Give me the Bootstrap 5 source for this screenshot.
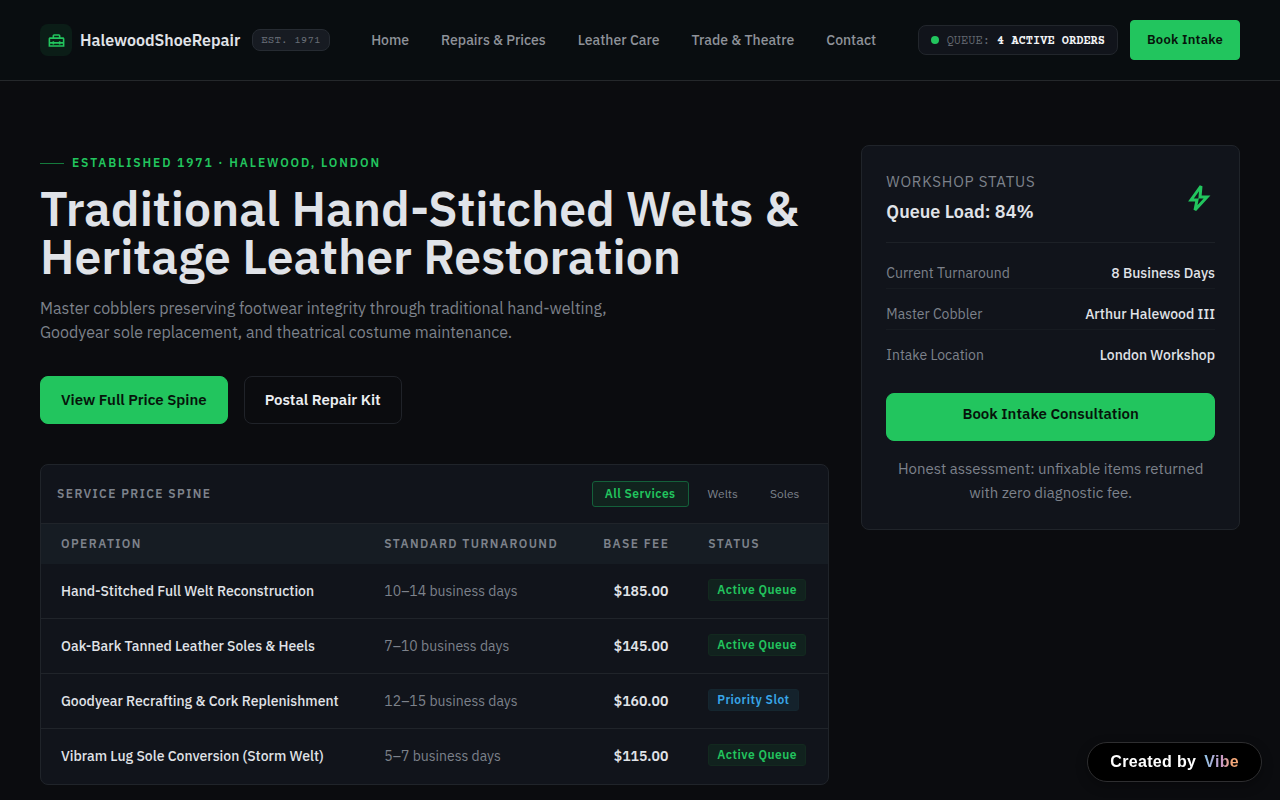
<!DOCTYPE html>
<html lang="en">
<head>
<meta charset="utf-8">
<meta name="viewport" content="width=device-width, initial-scale=1">
<title>Halewood Shoe Repair</title>
<link href="https://cdn.jsdelivr.net/npm/bootstrap@5.3.0/dist/css/bootstrap.min.css" rel="stylesheet">
<style>
:root{--green:#22c55e;--ink:#e0e3e8;--muted:#7d828b;--line:#20242a;--panel:#11141b}
body{background:#0b0c0f;color:var(--ink);font-family:"IBM Plex Sans",Roboto,"Liberation Sans",sans-serif;font-size:16px;line-height:24px}
a{color:inherit;text-decoration:none}
.wrap{padding-left:40px;padding-right:40px}
.site-head{background:#090d10;border-bottom:1px solid #25282b;min-height:81px}
.logo-box{width:32px;height:32px;border-radius:8px;background:#0b1d17;color:var(--green)}
.mono{font-family:"Courier Prime","Courier 10 Pitch","Nimbus Mono PS",FreeMono,"Liberation Mono",monospace}
.est{font-size:11px;line-height:18px;padding:2px 8px 0;border:1px solid #262b32;border-radius:8px;background:#171b22;color:#686e77;margin-left:4px}
.main-nav{font-size:14px;font-weight:500;color:#8e9299;gap:32px}
.queue{font-size:12px;padding:0 12px;border:1px solid #22262c;border-radius:8px;background:var(--panel);color:#62676f}
.queue-text{line-height:24px;padding-top:4px}
.queue b{color:#f2f3f5}
.dot{width:8px;height:8px;border-radius:50%;background:var(--green)}
.btn{--bs-btn-font-weight:600;--bs-btn-font-size:15px;--bs-btn-border-radius:8px;--bs-btn-padding-x:20px;height:48px;line-height:24px}
.btn-green{--bs-btn-bg:#22c55e;--bs-btn-color:#06140b;--bs-btn-border-color:#22c55e;--bs-btn-hover-bg:#1eb054;--bs-btn-hover-color:#06140b}
.btn-line{--bs-btn-color:#eceef1;--bs-btn-border-color:#202329;--bs-btn-hover-color:#fff;--bs-btn-hover-border-color:#444}
.btn-small{--bs-btn-font-size:13px;--bs-btn-border-radius:4px;--bs-btn-padding-x:16px;height:40px;letter-spacing:.02em}
.hero{padding-top:64px;padding-bottom:16px}
.hero .row{--bs-gutter-x:32px}
.eyebrow{font-size:12px;font-weight:600;letter-spacing:.16em;color:var(--green);line-height:16px;padding-top:10px}
.eyebrow::before{content:"";width:24px;height:1px;background:#157a3c}
h1{font-size:48px;line-height:48px;font-weight:600;margin:13px 0 16px}
.intro{color:var(--muted);max-width:600px;margin-bottom:32px}
.panel{background:var(--panel);border:1px solid var(--line);border-radius:8px}
.price-card{margin-top:40px}
.caps,.prices thead th{font-size:12px;font-weight:600;letter-spacing:.12em;color:var(--muted)}
.caps{line-height:24px}
.filters{gap:6px}
.filter{font-size:12px;line-height:24px;padding:0 12px;border:1px solid transparent;border-radius:3px;background:none;color:var(--muted)}
.filter.active{font-weight:600;letter-spacing:.04em;color:var(--green);border-color:#14603a;background:#11231e}
.prices{--bs-table-bg:transparent;--bs-table-color:var(--ink);table-layout:fixed;margin:0;font-size:14px;line-height:24px;white-space:nowrap}
.prices th,.prices td{padding:0 20px;height:55px;border:0;border-top:1px solid var(--line);vertical-align:middle}
.prices thead th{height:40px;background:#161c23}
.prices tbody tr:first-child td{border-top:0}
.prices td:nth-child(1){font-weight:500}
.prices td:nth-child(2){color:var(--muted)}
.prices td:nth-child(3){font-weight:600}
.tag{display:inline-block;vertical-align:top;font-size:12px;line-height:20px;font-weight:600;padding:0 8px;border:1px solid #13291f;border-radius:3px;background:#11221e;color:var(--green);letter-spacing:.04em}
.tag-blue{border-color:#15262f;background:#14222c;color:#38a6e8}
.status{padding:24px}
.status-top{border-bottom:1px solid #1d2127}
.status-title{font-size:15px;letter-spacing:.05em;color:var(--muted)}
.status-load{font-size:18px;font-weight:600;line-height:28px;margin:4px 0 0}
.status-note{font-size:15px;color:var(--muted)}
.facts{margin:5px 0 0}
.facts div{font-size:14px;line-height:22px;padding:14px 0 4px;border-bottom:1px solid #171b21}
.facts div:last-child{border:0}
.facts dt{font-weight:400;color:var(--muted)}
.facts dd{font-weight:500;margin:0}
.btn-raised{padding:8px 20px 14px;margin:23px 0 16px}
.made{position:fixed;right:18px;bottom:18px;font:700 16px/38px "Liberation Sans",sans-serif;letter-spacing:.02em;background:#000;border:1px solid #2e2e30;border-radius:20px;padding:0 22px;color:#fff;box-shadow:0 4px 12px rgba(0,0,0,.3)}
.made span{background:linear-gradient(90deg,#8ec5e8,#c79ac8 50%,#f5a878 80%);-webkit-background-clip:text;background-clip:text;color:transparent}
</style>
</head>
<body>
<header class="site-head wrap d-flex align-items-center justify-content-between">
  <div class="d-flex align-items-center gap-2">
    <a href="#" class="d-flex align-items-center gap-2 fw-semibold">
      <span class="logo-box d-flex align-items-center justify-content-center"><svg width="19" height="19" viewBox="0 0 24 24" fill="currentColor" aria-hidden="true"><path d="M20 8h-3V6c0-1.100-.9-2-2-2H9c-1.100 0-2 .9-2 2v2H4c-1.100 0-2 .9-2 2v10h20V10c0-1.100-.9-2-2-2zM9 6h6v2H9V6zm11 4v4h-3v-1h-2v1H9v-1H7v1H4v-4h16zM4 18v-2h3v1h2v-1h6v1h2v-1h3v2H4z"/></svg></span>
      HalewoodShoeRepair
    </a>
    <span class="est mono">EST. 1971</span>
  </div>
  <nav class="main-nav d-flex" aria-label="Main">
    <a href="#">Home</a><a href="#">Repairs &amp; Prices</a><a href="#">Leather Care</a><a href="#">Trade &amp; Theatre</a><a href="#">Contact</a>
  </nav>
  <div class="head-actions d-flex align-items-center gap-2">
    <div class="queue mono d-flex align-items-center gap-2 me-1"><span class="dot"></span><span class="queue-text">QUEUE: <b>4 ACTIVE ORDERS</b></span></div>
    <button type="button" class="btn btn-green btn-small">Book Intake</button>
  </div>
</header>
<main class="hero wrap">
  <div class="row">
    <div class="col-8">
      <div class="eyebrow d-flex align-items-center gap-2">ESTABLISHED 1971 · HALEWOOD, LONDON</div>
      <h1>Traditional Hand-Stitched Welts &amp; Heritage Leather Restoration</h1>
      <p class="intro">Master cobblers preserving footwear integrity through traditional hand-welting, Goodyear sole replacement, and theatrical costume maintenance.</p>
      <div class="d-flex gap-3">
        <button type="button" class="btn btn-green">View Full Price Spine</button>
        <button type="button" class="btn btn-line">Postal Repair Kit</button>
      </div>
      <section class="panel price-card overflow-hidden">
        <div class="d-flex align-items-center justify-content-between p-3">
          <h2 class="caps m-0">SERVICE PRICE SPINE</h2>
          <div class="filters d-flex">
            <button type="button" class="filter active">All Services</button>
            <button type="button" class="filter">Welts</button>
            <button type="button" class="filter">Soles</button>
          </div>
        </div>
        <table class="table prices">
          <colgroup><col><col style="width:219px"><col style="width:105px"><col style="width:140px"></colgroup>
          <thead><tr><th scope="col">OPERATION</th><th scope="col">STANDARD TURNAROUND</th><th scope="col" class="text-end">BASE FEE</th><th scope="col">STATUS</th></tr></thead>
          <tbody>
            <tr><td>Hand-Stitched Full Welt Reconstruction</td><td>10–14 business days</td><td class="text-end">$185.00</td><td><span class="tag">Active Queue</span></td></tr>
            <tr><td>Oak-Bark Tanned Leather Soles &amp; Heels</td><td>7–10 business days</td><td class="text-end">$145.00</td><td><span class="tag">Active Queue</span></td></tr>
            <tr><td>Goodyear Recrafting &amp; Cork Replenishment</td><td>12–15 business days</td><td class="text-end">$160.00</td><td><span class="tag tag-blue">Priority Slot</span></td></tr>
            <tr><td>Vibram Lug Sole Conversion (Storm Welt)</td><td>5–7 business days</td><td class="text-end">$115.00</td><td><span class="tag">Active Queue</span></td></tr>
          </tbody>
        </table>
      </section>
    </div>
    <div class="col-4">
      <aside class="panel status">
        <div class="status-top d-flex align-items-center justify-content-between pb-3">
          <div><div class="status-title">WORKSHOP STATUS</div><h2 class="status-load">Queue Load: 84%</h2></div>
          <svg width="32" height="32" viewBox="0 0 32 32" fill="none" stroke="#22c55e" stroke-width="3" stroke-miterlimit="3" aria-hidden="true"><path d="M18 4 8 18h6l-2 10L24 15h-7z"/></svg>
        </div>
        <dl class="facts">
          <div class="d-flex justify-content-between"><dt>Current Turnaround</dt><dd>8 Business Days</dd></div>
          <div class="d-flex justify-content-between"><dt>Master Cobbler</dt><dd>Arthur Halewood III</dd></div>
          <div class="d-flex justify-content-between"><dt>Intake Location</dt><dd>London Workshop</dd></div>
        </dl>
        <button type="button" class="btn btn-green btn-raised w-100">Book Intake Consultation</button>
        <p class="status-note text-center m-0">Honest assessment: unfixable items returned with zero diagnostic fee.</p>
      </aside>
    </div>
  </div>
</main>
<a href="#" class="made d-flex gap-2">Created by <span>Vibe</span></a>
<script src="https://cdn.jsdelivr.net/npm/bootstrap@5.3.0/dist/js/bootstrap.bundle.min.js"></script>
</body>
</html>
